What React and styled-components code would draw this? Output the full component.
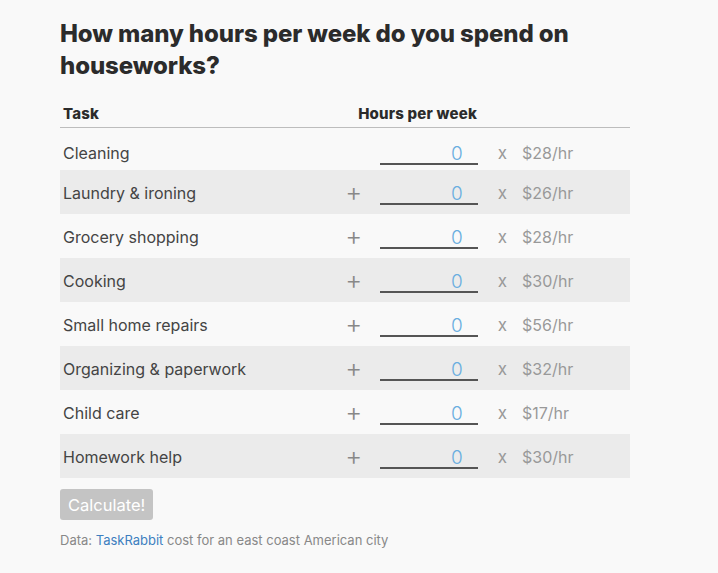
import React from "react";
import styled, { createGlobalStyle } from "styled-components";

const Global = createGlobalStyle`
  html, body { margin: 0; padding: 0; background: #f9f9f9; }
  body { font-family: Inter, "Noto Sans", sans-serif; color: #333; }
`;

const Page = styled.div`
  width: 570px;
  padding: 18px 0 0 60px;
`;

const Title = styled.h1`
  margin: 0 0 18px 0;
  font-size: 24px;
  line-height: 32px;
  font-weight: 800;
  color: #2b2b2b;
  letter-spacing: -0.1px;
`;

const Header = styled.div`
  display: flex;
  align-items: center;
  height: 27px;
  padding-left: 3px;
  border-bottom: 1px solid #bdbdbd;
  font-size: 15px;
  font-weight: 800;
  color: #2b2b2b;
  letter-spacing: 0.2px;
`;

const HeadTask = styled.div`
  flex: 1;
`;

const HeadHours = styled.div`
  margin-right: 153px;
`;

const Row = styled.div`
  box-sizing: border-box;
  display: flex;
  align-items: center;
  height: ${(p) => (p.$first ? 42 : 44)}px;
  padding: ${(p) => (p.$first ? "6px 0 0 3px" : "0 0 0 3px")};
  background: ${(p) => (p.$shade ? "#ebebeb" : "transparent")};
  font-size: 16px;
  color: #444;
`;

const TaskName = styled.div`
  flex: 1;
  padding-top: 2px;
`;

const Plus = styled.div`
  width: 30px;
  margin-right: 11px;
  text-align: center;
  font-size: 26px;
  font-weight: 300;
  line-height: 26px;
  color: #888;
  visibility: ${(p) => (p.$hidden ? "hidden" : "visible")};
`;

const HoursInput = styled.input`
  box-sizing: border-box;
  width: 98px;
  height: 26px;
  padding: 4px 15px 0 0;
  border: none;
  border-bottom: 2px solid #555;
  background: transparent;
  text-align: right;
  font-family: Inter, "Noto Sans", sans-serif;
  font-size: 19px;
  line-height: 20px;
  font-weight: 300;
  color: #6aaee0;
  outline: none;
`;

const Times = styled.div`
  padding: 2px 15px 0 20px;
  font-size: 17px;
  color: #999;
`;

const Rate = styled.div`
  width: 108px;
  padding-top: 2px;
  font-size: 16px;
  color: #999;
`;

const Button = styled.button`
  margin-top: 11px;
  height: 31px;
  padding: 0 8px;
  border: none;
  border-radius: 3px;
  background: #c4c4c4;
  color: #fff;
  font-family: Inter, "Noto Sans", sans-serif;
  font-size: 16.5px;
`;

const Note = styled.p`
  margin: 12px 0 0 0;
  font-size: 13px;
  color: #888;
`;

const Link = styled.a`
  color: #3d7fc0;
  text-decoration: none;
`;

const tasks = [
  ["Cleaning", 28],
  ["Laundry & ironing", 26],
  ["Grocery shopping", 28],
  ["Cooking", 30],
  ["Small home repairs", 56],
  ["Organizing & paperwork", 32],
  ["Child care", 17],
  ["Homework help", 30],
];

export default function App() {
  return (
    <Page>
      <Global />
      <Title>How many hours per week do you spend on houseworks?</Title>
      <Header>
        <HeadTask>Task</HeadTask>
        <HeadHours>Hours per week</HeadHours>
      </Header>
      {tasks.map(([name, rate], i) => (
        <Row key={name} $shade={i % 2 === 1} $first={i === 0}>
          <TaskName>{name}</TaskName>
          <Plus $hidden={i === 0}>+</Plus>
          <HoursInput defaultValue="0" />
          <Times>x</Times>
          <Rate>${rate}/hr</Rate>
        </Row>
      ))}
      <Button>Calculate!</Button>
      <Note>
        Data: <Link href="#">TaskRabbit</Link> cost for an east coast American city
      </Note>
    </Page>
  );
}
